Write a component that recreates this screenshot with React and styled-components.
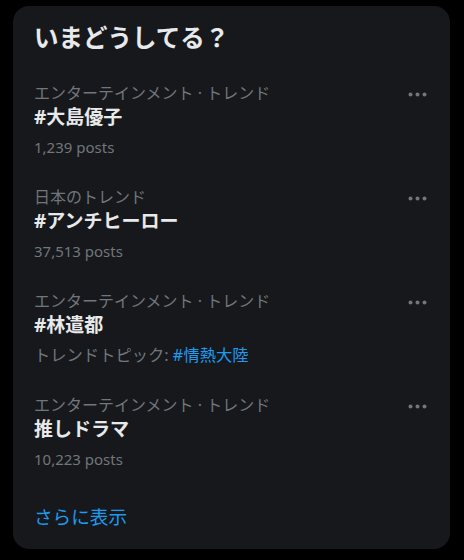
import React from "react"
import styled, { createGlobalStyle } from "styled-components"

const GlobalStyle = createGlobalStyle`
  body {
    margin: 0;
    background-color: #000000;
    font-family: "Noto Sans", "Noto Sans CJK JP", sans-serif;
  }
`

const Card = styled.section`
  box-sizing: border-box;
  width: 437px;
  height: 543px;
  margin: 6px 0 0 13px;
  padding-top: 16px;
  background-color: #16181c;
  border-radius: 16px;
  overflow: hidden;
`

const Title = styled.h2`
  margin: 0 0 16px;
  padding: 0 21px;
  font-size: 24.5px;
  line-height: 32px;
  font-weight: 700;
  color: #e7e9ea;
`

const Row = styled.div`
  display: flex;
  justify-content: space-between;
  align-items: flex-start;
  height: 104px;
  box-sizing: border-box;
  padding: 12px 23px 0 21px;
`

const Body = styled.div`
  display: flex;
  flex-direction: column;
`

const Category = styled.div`
  font-size: 16px;
  line-height: 22px;
  color: #71767b;
`

const Name = styled.div`
  font-size: 19px;
  line-height: 26px;
  font-weight: 700;
  color: #e7e9ea;
`

const Meta = styled.div`
  margin-top: 7px;
  font-size: ${props => (props.jp ? "16.3px" : "15px")};
  line-height: 20px;
  color: #71767b;
`

const Link = styled.span`
  color: #1d9bf0;
`

const More = styled.div`
  padding: 18px 21px 0;
  font-size: 18.6px;
  line-height: 26px;
  color: #1d9bf0;
`

const DotsButton = styled.div`
  display: flex;
  align-items: center;
  height: 24px;
`

const Dots = () => (
  <DotsButton>
    <svg width="19" height="5" viewBox="0 0 19 5">
      <circle cx="2.5" cy="2.5" r="2" fill="#71767b" />
      <circle cx="9.5" cy="2.5" r="2" fill="#71767b" />
      <circle cx="16.5" cy="2.5" r="2" fill="#71767b" />
    </svg>
  </DotsButton>
)

const trends = [
  { category: "エンターテインメント · トレンド", name: "#大島優子", posts: "1,239 posts" },
  { category: "日本のトレンド", name: "#アンチヒーロー", posts: "37,513 posts" },
  { category: "エンターテインメント · トレンド", name: "#林遣都", topic: "#情熱大陸" },
  { category: "エンターテインメント · トレンド", name: "推しドラマ", posts: "10,223 posts" }
]

const App = () => {
  return (
    <>
      <GlobalStyle />
      <Card>
        <Title>いまどうしてる？</Title>
        {trends.map(t => (
          <Row key={t.name}>
            <Body>
              <Category>{t.category}</Category>
              <Name>{t.name}</Name>
              {t.topic ? (
                <Meta jp>
                  トレンドトピック: <Link>{t.topic}</Link>
                </Meta>
              ) : (
                <Meta>{t.posts}</Meta>
              )}
            </Body>
            <Dots />
          </Row>
        ))}
        <More>さらに表示</More>
      </Card>
    </>
  )
}

export default App
